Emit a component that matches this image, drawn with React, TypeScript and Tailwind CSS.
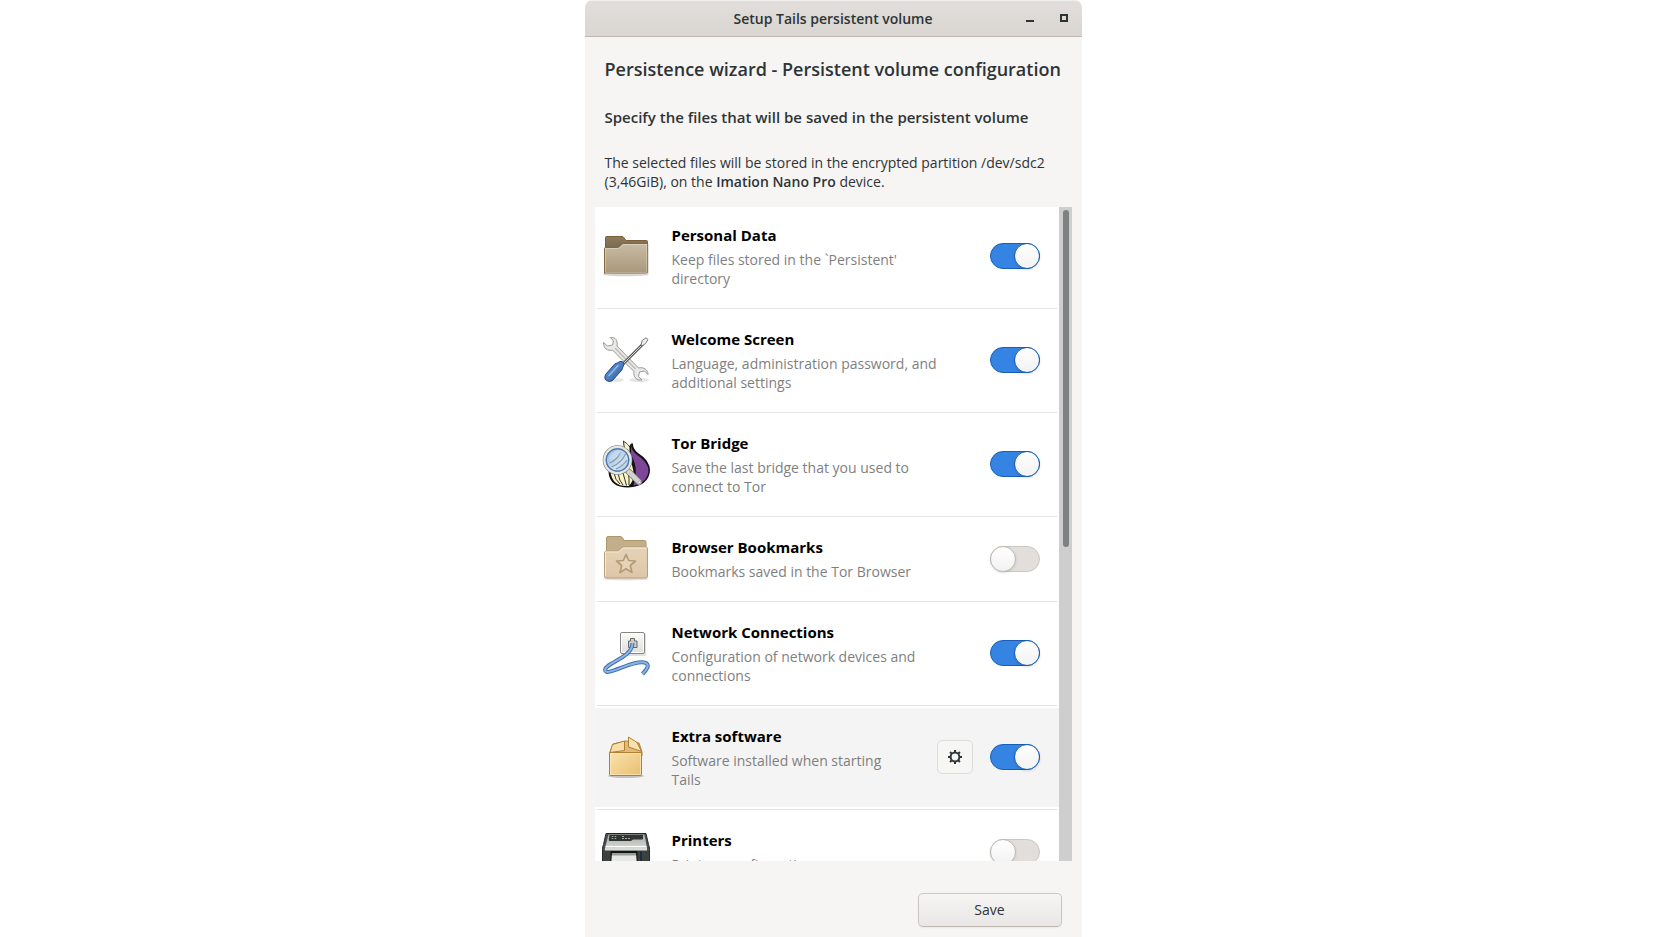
import React, { useState } from 'react';

interface Feature {
  id: string;
  title: string;
  description: string;
  icon: React.ReactNode;
  enabled: boolean;
  configurable?: boolean;
  highlighted?: boolean;
}

const FolderIcon = () => (
  <svg viewBox="0 1 48 48" className="size-12">
    <defs>
      <linearGradient id="folderFront" x1="0" y1="0" x2="0" y2="1">
        <stop offset="0" stopColor="#c9bba5" />
        <stop offset="1" stopColor="#a99779" />
      </linearGradient>
      <linearGradient id="folderBack" x1="0" y1="0" x2="0" y2="1">
        <stop offset="0" stopColor="#8d7b5c" />
        <stop offset="1" stopColor="#75654a" />
      </linearGradient>
    </defs>
    <ellipse cx="24" cy="43.5" rx="23" ry="1.8" fill="#000" opacity="0.16" />
    <path d="M3.5 20V6.500q0-1 1-1h15.500q1 0 1.500.700L24 9.500h20.500q1 0 1 1V20z" fill="url(#folderBack)" stroke="#7d6037" />
    <path d="M2.500 42.500v-25q0-1 1-1h12q1 0 1.700-.7l2.800-2.600q.7-.7 1.700-.7h23q1 0 1 1v28q0 .500-.500.500H3q-.500 0-.500-.500z" fill="url(#folderFront)" stroke="#84663a" />
    <path d="M3.500 41.500V17.500h12.500q1 0 1.700-.7l2.600-2.600q.7-.7 1.700-.7h22.700v28z" fill="none" stroke="#fff" opacity="0.32" />
  </svg>
);

const ToolsIcon = () => (
  <svg viewBox="0 0 48 48" className="size-12">
    <defs>
      <linearGradient id="handleBlue" x1="0" y1="0" x2="1" y2="1">
        <stop offset="0" stopColor="#2f5c9c" />
        <stop offset="0.45" stopColor="#5586c8" />
        <stop offset="1" stopColor="#204a87" />
      </linearGradient>
    </defs>
    <ellipse cx="12" cy="44" rx="10" ry="2" fill="#000" opacity="0.1" />
    <ellipse cx="37" cy="44" rx="10" ry="2" fill="#000" opacity="0.1" />
    <path
      d="M8.500 1.500c5-.5 7.500 3 6.500 8.500L36.500 32c5-1.200 9.500 1.500 9.500 6.500l-3.500-3.500-5 1-1 4.500 3.500 3.500c-5.500.8-9-3-8-8.500L10.500 14c-5 1.300-9-1.500-9-7.500l4 3.500 5-1L11.500 5z"
      fill="#e9e9e7"
      stroke="#989a96"
    />
    <path d="M13 12l20.500 21" stroke="#bcbdb9" strokeWidth="1.500" fill="none" />
    <path d="M20 29L41 8" stroke="#5e605c" strokeWidth="3" />
    <path d="M20.500 28.500L41 8" stroke="#cfd0cd" strokeWidth="1" />
    <path d="M39 9l1.200-4.500L44 1.800l2 1.800-2.500 4L40 10z" fill="#eee" stroke="#777976" />
    <path d="M17 26q2-1.500 4 .2t.2 4.300q-.8 1.500-1.400 3.500L10.500 44.500q-3 2-6 0t-1-6l9.500-10.800q2.500-.4 4-1.700z" fill="url(#handleBlue)" stroke="#204a87" />
    <path d="M7 39.500l9-10" stroke="#94b8e6" strokeWidth="1.500" strokeLinecap="round" />
  </svg>
);

const TorIcon = () => (
  <svg viewBox="0 0 48 48" className="size-12">
    <defs>
      <linearGradient id="lensBlue" x1="0" y1="0" x2="1" y2="1">
        <stop offset="0" stopColor="#7facdd" />
        <stop offset="0.6" stopColor="#cfdfed" />
        <stop offset="1" stopColor="#a9c7e4" />
      </linearGradient>
    </defs>
    <path d="M21 0.500l3 2 3.500 3.500 1.500-2.500 2 0q-.5 5 5 9.500 12 7.500 12 17.500-1 15.500-22 17-18 0-19.500-15L22 10z" fill="#111" />
    <path d="M22 2q4 2 5.500 5 .5 6-1 11 5 8 5 16 0 8-5 12-16 1-18-14 0-8 8-13 6-4 6.500-9z" fill="#fbf3c9" />
    <path d="M29 4q0 6 5.500 10.500Q46.500 22 46.500 31 45 43 31 45.500 33.500 39 33 30T28 15z" fill="#7d4698" />
    <path d="M28.500 6v9q5 8 4.700 18 0 7-2.500 12.500" fill="none" stroke="#141414" strokeWidth="1.200" />
    <path d="M12 33q1 7 6 11M16 33q1 8 5 12M21 33q2 7 3.500 12.500M26 31q1.500 8 1 14M25 9q0 7 3.500 15" fill="none" stroke="#171717" strokeWidth="0.900" />
    <path d="M26.500 31.500L37 42" stroke="#747672" strokeWidth="6.200" strokeLinecap="round" />
    <path d="M26.500 31.500L37 42" stroke="#d3d3d1" strokeWidth="4.600" strokeLinecap="round" />
    <circle cx="37.300" cy="42.300" r="1.300" fill="#fff" stroke="#888" strokeWidth="0.600" />
    <circle cx="15.500" cy="20" r="13" fill="url(#lensBlue)" stroke="#7f817d" strokeWidth="3.600" />
    <circle cx="15.500" cy="20" r="13" fill="none" stroke="#e6e6e4" strokeWidth="2.400" />
    <circle cx="15.500" cy="20" r="11.200" fill="none" stroke="#4678b6" strokeWidth="1.200" />
    <path d="M7.500 23q8-3 11-11M9.500 27q10-4 14-13M14 29q7-3 11-9" fill="none" stroke="#8098ac" strokeWidth="1.100" />
    <path d="M7 18q2-7 9-8l4 1q-3 7-12 9z" fill="#fff" opacity="0.28" />
  </svg>
);

const BookmarksIcon = () => (
  <svg viewBox="0 0 48 48" className="size-12">
    <defs>
      <linearGradient id="bookmarkFront" x1="0" y1="0" x2="0" y2="1">
        <stop offset="0" stopColor="#e6d3b8" />
        <stop offset="1" stopColor="#dcc6a6" />
      </linearGradient>
    </defs>
    <ellipse cx="24" cy="44" rx="23" ry="1.500" fill="#000" opacity="0.12" />
    <path d="M4.500 22V3q0-1.500 1.500-1.500h12q1.500 0 2.300 1L22 5.500h20.500q1.500 0 1.500 1.500v15z" fill="#c3ae8a" stroke="#ae9670" />
    <path d="M2.500 41.500V18q0-2 2-2h10.500q1.300 0 2.200-.8l2.600-2.400q.8-.8 2.200-.8h22q1.500 0 1.500 1.500v28q0 1.500-1.500 1.500H4q-1.500 0-1.500-1.500z" fill="url(#bookmarkFront)" stroke="#b89f78" />
    <path d="M3.500 41V17h12q1 0 2-.8l2.600-2.400q.8-.8 2-.8h22.400" fill="none" stroke="#f5e9d5" />
    <path d="M24 19.500l2.700 6 6.800.5-5.200 4.500 1.700 7-6-3.700-6 3.700 1.700-7-5.200-4.500 6.800-.5z" fill="#e6d4b9" stroke="#b49c79" strokeWidth="1.700" strokeLinejoin="round" />
  </svg>
);

const NetworkIcon = () => (
  <svg viewBox="0 0 48 48" className="size-12">
    <defs>
      <linearGradient id="socketPlate" x1="0" y1="0" x2="0" y2="1">
        <stop offset="0" stopColor="#fbfbfa" />
        <stop offset="1" stopColor="#dededc" />
      </linearGradient>
    </defs>
    <rect x="19" y="4" width="25" height="23" rx="1.500" fill="#000" opacity="0.12" />
    <rect x="18.500" y="3.500" width="24" height="21" rx="1.500" fill="url(#socketPlate)" stroke="#858783" />
    <rect x="19.500" y="4.500" width="22" height="19" rx="1" fill="none" stroke="#fff" />
    <path d="M26.500 18.500V12h2V9.500h4V12h2.500v6.500z" fill="#ccc" stroke="#686a66" />
    <path d="M30.500 14c0 15-26 19-27.500 27 .5 8 30-12 41-7 4 2.500.5 7-3.500 11" fill="none" stroke="#3f70b0" strokeWidth="4" />
    <path d="M30.500 14c0 15-26 19-27.500 27 .5 8 30-12 41-7 4 2.500.5 7-3.500 11" fill="none" stroke="#8db5e4" strokeWidth="2" />
  </svg>
);

const PackageIcon = () => (
  <svg viewBox="0 0 48 48" className="size-12">
    <defs>
      <linearGradient id="boxFront" x1="0" y1="0" x2="1" y2="1">
        <stop offset="0" stopColor="#fce3ac" />
        <stop offset="1" stopColor="#e8be71" />
      </linearGradient>
    </defs>
    <ellipse cx="24" cy="43" rx="18" ry="2" fill="#000" opacity="0.2" />
    <path d="M8 19l3-8 13-3 13 2 3 9v4H8z" fill="#e0bb7a" stroke="#b27f32" />
    <path d="M7.500 19.500h32v22q0 1-1 1h-30q-1 0-1-1z" fill="url(#boxFront)" stroke="#b27f32" />
    <path d="M8.500 20.500h30v21h-30z" fill="none" stroke="#fff0c8" opacity="0.6" />
    <path d="M10.500 11.500l12-3.500v9.500L8 19.500z" fill="#f8deaa" stroke="#b27f32" strokeLinejoin="round" />
    <path d="M26.500 4l8.500 5.500 4.500 9-13-4.500z" fill="#f8e0b0" stroke="#b27f32" strokeLinejoin="round" />
  </svg>
);

const PrinterIcon = () => (
  <svg viewBox="0 0 48 48" className="size-12">
    <defs>
      <linearGradient id="printerBody" x1="0" y1="0" x2="0" y2="1">
        <stop offset="0" stopColor="#a9aba7" />
        <stop offset="1" stopColor="#e2e3e0" />
      </linearGradient>
    </defs>
    <path d="M4 5.500h40l2.500 11q1 2 1 5V35q0 3-2 3h-43q-2 0-2-3V21.500q0-3 1-5z" fill="#4b5150" stroke="#242827" />
    <path d="M6.500 6.500h36l2.500 14v3H3v-3z" fill="url(#printerBody)" />
    <path d="M7.500 7h33.500v3.500q0 1-1 1H31l-2 1.500H8q-1.500 0-1.200-1.500z" fill="#303534" />
    <path d="M10.500 8v4M13.500 8v4" stroke="#a2a6a3" strokeWidth="1.500" strokeDasharray="1 1" />
    <path d="M20 10.500h8M20 8.500h2" stroke="#a2a6a3" strokeDasharray="2 1" />
    <path d="M3.500 18.500h41" stroke="#fff" />
    <path d="M1 22.500h46V36H1z" fill="#3c4140" />
    <path d="M8.500 23h27v14h-27z" fill="#131515" />
    <path d="M10 25h24l1 13H9z" fill="#e7e7e5" />
    <path d="M10 25h24v2.500H10z" fill="#999b98" />
    <path d="M38 23.500h2V34h-2z" fill="#1e2b45" />
  </svg>
);

const GearIcon = () => (
  <svg viewBox="0 0 16 16" className="size-4" fill="none" stroke="#2e3436">
    <circle cx="8" cy="8" r="4.400" strokeWidth="2" />
    <path
      d="M8 1v3M8 12v3M1 8h3M12 8h3M3.050 3.050l2.100 2.100M10.850 10.850l2.100 2.100M3.050 12.950l2.100-2.100M10.850 5.150l2.100-2.100"
      strokeWidth="2"
    />
  </svg>
);

const initialFeatures: Feature[] = [
  { id: 'personal', title: 'Personal Data', description: "Keep files stored in the `Persistent'\ndirectory", icon: <FolderIcon />, enabled: true },
  { id: 'welcome', title: 'Welcome Screen', description: 'Language, administration password, and\nadditional settings', icon: <ToolsIcon />, enabled: true },
  { id: 'bridge', title: 'Tor Bridge', description: 'Save the last bridge that you used to\nconnect to Tor', icon: <TorIcon />, enabled: true },
  { id: 'bookmarks', title: 'Browser Bookmarks', description: 'Bookmarks saved in the Tor Browser', icon: <BookmarksIcon />, enabled: false },
  { id: 'network', title: 'Network Connections', description: 'Configuration of network devices and\nconnections', icon: <NetworkIcon />, enabled: true },
  { id: 'software', title: 'Extra software', description: 'Software installed when starting\nTails', icon: <PackageIcon />, enabled: true, configurable: true, highlighted: true },
  { id: 'printers', title: 'Printers', description: 'Printers configuration', icon: <PrinterIcon />, enabled: false },
];

interface FeatureRowProps {
  feature: Feature;
  onToggle: (id: string) => void;
}

const FeatureRow: React.FC<FeatureRowProps> = ({ feature, onToggle }) => (
  <li>
    <div className={`flex items-center pr-[19px] pb-px pl-[7px] ${feature.highlighted ? 'bg-[#f4f4f4]' : 'bg-white'}`}>
      <div className="shrink-0">{feature.icon}</div>
      <div className="ml-[22px] min-w-0 flex-1 pt-4 pb-[17px]">
        <label htmlFor={feature.id} className="block text-[15px] leading-6 font-bold text-black">{feature.title}</label>
        <p className="mt-[3px] text-sm leading-[19px] whitespace-pre-line text-[#7f7f7f]">{feature.description}</p>
      </div>
      {feature.configurable && (
        <button aria-label="Configure" className="mr-[17px] flex h-[34px] w-9 shrink-0 items-center justify-center rounded-[5px] border border-[#dfdddb] bg-[#f6f6f5]">
          <GearIcon />
        </button>
      )}
      <input
        id={feature.id}
        type="checkbox"
        role="switch"
        checked={feature.enabled}
        onChange={() => onToggle(feature.id)}
        className="flex h-[26px] w-[50px] shrink-0 appearance-none items-center rounded-full border border-[#cdc7c2] bg-[#e1dedb] before:-mx-px before:size-[26px] before:rounded-full before:border before:border-[#bfb8b1] before:bg-linear-to-b before:from-white before:to-[#f2f2f2] before:shadow-sm checked:justify-end checked:border-[#185fb4] checked:bg-[#3584e4] checked:before:border-[#185fb4]"
      />
    </div>
  </li>
);

const App: React.FC = () => {
  const [features, setFeatures] = useState<Feature[]>(initialFeatures);

  const toggleFeature = (id: string) => {
    setFeatures((prev) => prev.map((f) => (f.id === id ? { ...f, enabled: !f.enabled } : f)));
  };

  return (
    <div className="min-h-screen bg-white font-['Open_Sans','Noto_Sans',sans-serif] text-[#2e3436]">
      <div className="mx-auto flex h-screen w-full max-w-[497px] flex-col overflow-hidden rounded-t-lg bg-[#f6f5f4]">
        <header className="grid h-[37px] shrink-0 grid-cols-[1fr_auto_1fr] items-center border-t border-b border-t-[#efedec] border-b-[#bfb8b1] bg-linear-to-b from-[#e1dedb] to-[#dad6d2]">
          <span></span>
          <h1 className="text-sm font-semibold">Setup Tails persistent volume</h1>
          <div className="flex justify-end gap-[18px] pr-[10px] pb-px">
            <button aria-label="Minimize" className="flex size-4 items-center justify-center">
              <svg viewBox="0 0 16 16" className="size-4"><path d="M4 10h8v2H4z" fill="#2e3436" /></svg>
            </button>
            <button aria-label="Maximize" className="flex size-4 items-center justify-center">
              <svg viewBox="0 0 16 16" className="size-4"><path d="M5 5h6v6H5z" fill="none" stroke="#2e3436" strokeWidth="2" /></svg>
            </button>
          </div>
        </header>

        <div className="px-5">
          <h2 className="mt-[18px] text-lg leading-7 font-semibold whitespace-nowrap">Persistence wizard - Persistent volume configuration</h2>
          <h3 className="mt-[22px] text-[15px] leading-6 font-semibold whitespace-nowrap">Specify the files that will be saved in the persistent volume</h3>
          <p className="mt-6 text-sm leading-[19px]">
            The selected files will be stored in the encrypted partition /dev/sdc2 (3,46GiB), on the <b className="font-semibold">Imation Nano Pro</b> device.
          </p>
        </div>

        <div className="mx-[10px] mt-4 flex min-h-0 flex-1 bg-white">
          <ul className="min-w-0 flex-1 overflow-hidden">
            {features.map((feature, index) => (
              <React.Fragment key={feature.id}>
                {index > 0 && <li role="separator" className="mx-0.5 my-0.5 h-px bg-[#e4e4e4]" />}
                <FeatureRow feature={feature} onToggle={toggleFeature} />
              </React.Fragment>
            ))}
          </ul>
          <div className="w-[13px] shrink-0 bg-[#cecece] py-[3px] pl-1">
            <div className="h-[52%] w-[6px] rounded-full bg-[#7e8182]"></div>
          </div>
        </div>

        <footer className="flex justify-end px-5 pt-8 pb-[10px]">
          <button className="h-[34px] w-36 rounded-[5px] border border-[#cdc7c2] border-b-[#bfb8b1] bg-linear-to-b from-[#f6f5f4] to-[#e8e7e5] text-sm shadow-xs">Save</button>
        </footer>
      </div>
    </div>
  );
};

export default App;
